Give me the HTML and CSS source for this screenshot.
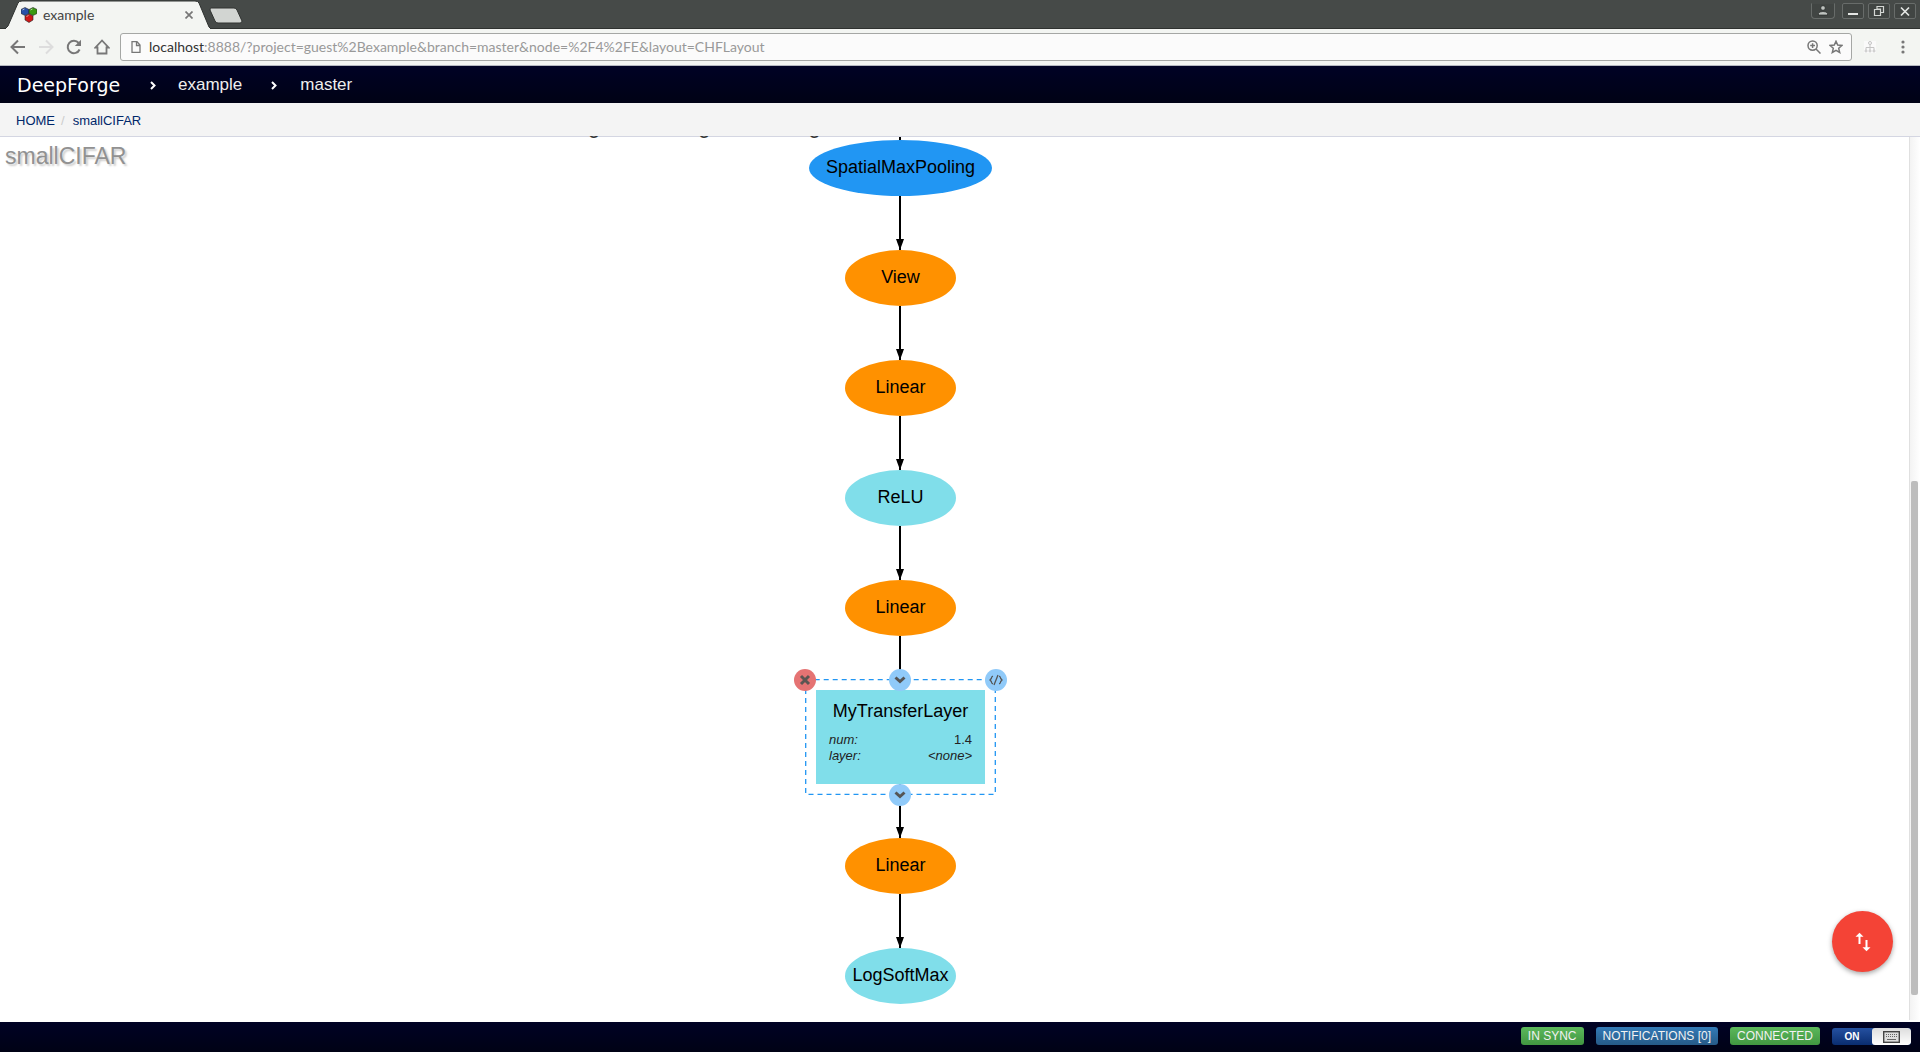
FILE: index.html
```html
<!DOCTYPE html>
<html lang="en">
<head>
<meta charset="utf-8">
<title>example</title>
<link rel="stylesheet" href="styles.css">
</head>
<body>
<header class="tabs">
  <div class="tab">
    <svg class="tab-shape" viewBox="0 0 206 29" width="206" height="29"><path d="M0 29L3 26L13 3Q14 1 17 1H190Q193 1 194 3L204 27L206 29Z" fill="#f3f5f2" stroke="#2f3230"/><path d="M1 29H205" stroke="#f3f5f2" stroke-width="2"/></svg>
    <svg class="favicon" viewBox="0 0 16 16" width="16" height="16"><g stroke="#222" stroke-width=".6"><path d="M4 .5l4 2v4l-4 2-4-2v-4z" fill="#2850a8"/><path d="M12 .5l4 2v4l-4 2-4-2v-4z" fill="#3a9a10"/><path d="M8 7l4 2v4l-4 2.5L4 13V9z" fill="#d01818"/></g><path d="M1.5 3l2-1M9.5 3l2-1M5.5 9.5l2-1" stroke="#fff" opacity=".6"/></svg>
    <span class="tab-title">example</span>
    <button class="plain" aria-label="Close tab"><svg viewBox="0 0 8 8" width="8" height="8"><path d="M.5.5l7 7M7.500.5l-7 7" stroke="#777" stroke-width="1.700"/></svg></button>
  </div>
  <button class="plain newtab" aria-label="New tab"><svg viewBox="0 0 34 17" width="34" height="17"><path d="M2 1H25Q27 1 28 3L33 14Q33 16 31 16H9Q7 16 6 14L1 3Q1 1 2 1Z" fill="#d2d5d2" stroke="#303331"/></svg></button>
  <div class="wm">
    <button class="wbtn user" aria-label="User"><svg viewBox="0 0 12 12" width="12" height="12"><g fill="#bfc3c0" stroke="#242625" stroke-width=".7"><circle cx="6" cy="3" r="2.300"/><path d="M1.500 10V8.500Q2 6.500 6 6.500T10.500 8.500V10Z"/></g></svg></button>
    <button class="wbtn" aria-label="Minimize"><svg viewBox="0 0 12 12" width="12" height="12"><path d="M1 9h10" stroke="#e4e6e4" stroke-width="2"/></svg></button>
    <button class="wbtn" aria-label="Restore"><svg viewBox="0 0 12 12" width="12" height="12"><path d="M4 4V1.500H10.500V7.500H8M1.500 4.500H7.500V10.500H1.500ZM4 4H7.500V7.500" fill="none" stroke="#d4d7d4" stroke-width="1.200"/></svg></button>
    <button class="wbtn" aria-label="Close"><svg viewBox="0 0 12 12" width="12" height="12"><path d="M2 2.500l8 8M10 2.500l-8 8" stroke="#e4e6e4" stroke-width="1.700"/></svg></button>
  </div>
</header>

<div class="toolbar">
  <button class="plain" aria-label="Back"><svg viewBox="0 0 16 16" width="16" height="16"><path d="M15 8H2M8 1.500L1.500 8L8 14.500" fill="none" stroke="#777" stroke-width="2"/></svg></button>
  <button class="plain" aria-label="Forward"><svg viewBox="0 0 16 16" width="16" height="16"><path d="M1 8H14M8 1.500L14.500 8L8 14.500" fill="none" stroke="#ddd" stroke-width="2"/></svg></button>
  <button class="plain" aria-label="Reload"><svg viewBox="0 0 16 16" width="16" height="16"><path d="M13.600 10.500A6.200 6.200 0 1 1 12.700 4" fill="none" stroke="#777" stroke-width="2"/><path d="M15 .8V7H8.800Z" fill="#777"/></svg></button>
  <button class="plain" aria-label="Home"><svg viewBox="0 0 16 16" width="16" height="16"><path d="M8 1.500L1.500 8.500H3.500V14.500H12.500V8.500H14.500Z" fill="none" stroke="#777" stroke-width="1.800"/></svg></button>
  <div class="omnibox">
    <svg viewBox="0 0 10 12" width="10" height="12"><path d="M1 .7H6L9 4V11.300H1ZM5.500 1V4.500H9" fill="none" stroke="#777" stroke-width="1.300"/></svg>
    <span class="url"><b>localhost</b>:8888/?project=guest%2Bexample&amp;branch=master&amp;node=%2F4%2FE&amp;layout=CHFLayout</span>
    <button class="plain" aria-label="Zoom"><svg viewBox="0 0 14 14" width="14" height="14"><g fill="none" stroke="#777" stroke-width="1.500"><circle cx="5.600" cy="5.600" r="4.600"/><path d="M9 9l4.500 4.500M3.200 5.600H8M5.600 3.200V8"/></g></svg></button>
    <button class="plain" aria-label="Bookmark"><svg viewBox="0 0 14 14" width="14" height="14"><path d="M7 1.300L8.700 5.100L12.900 5.500L9.700 8.300L10.700 12.500L7 10.300L3.300 12.500L4.300 8.300L1.100 5.500L5.300 5.100Z" fill="none" stroke="#777" stroke-width="1.500"/></svg></button>
  </div>
  <button class="plain" aria-label="Extension"><svg viewBox="0 0 12 12" width="12" height="12"><rect width="12" height="12" fill="#fafafa"/><g fill="none" stroke="#c4c4c4"><circle cx="6" cy="2" r="1.500"/><path d="M6 3.500V9M2 9V6.500H10V9"/><circle cx="2" cy="10" r="1"/><circle cx="6" cy="10" r="1"/><circle cx="10" cy="10" r="1"/></g></svg></button>
  <button class="plain menu" aria-label="Menu"><svg viewBox="0 0 4 14" width="4" height="14"><g fill="#777"><circle cx="2" cy="2" r="1.600"/><circle cx="2" cy="7" r="1.600"/><circle cx="2" cy="12" r="1.600"/></g></svg></button>
</div>

<nav class="navbar">
  <a class="brand" href="#">DeepForge</a>
  <svg class="sep" viewBox="0 0 6 9" width="6" height="9"><path d="M1 1L4.500 4.500L1 8" fill="none" stroke="#fff" stroke-width="2"/></svg>
  <a href="#">example</a>
  <svg class="sep" viewBox="0 0 6 9" width="6" height="9"><path d="M1 1L4.500 4.500L1 8" fill="none" stroke="#fff" stroke-width="2"/></svg>
  <a href="#">master</a>
</nav>

<nav class="crumbs"><a href="#">HOME</a><span>/</span><a href="#">smallCIFAR</a></nav>

<main class="canvas">
  <h1>smallCIFAR</h1>
  <div class="hint" aria-hidden="true"><span>g</span><span>g</span><span>g</span></div>
  <div class="graph">
    <div class="edge"></div>
    <div class="node wide blue">SpatialMaxPooling</div>
    <div class="edge"></div>
    <div class="node orange">View</div>
    <div class="edge"></div>
    <div class="node orange">Linear</div>
    <div class="edge"></div>
    <div class="node cyan">ReLU</div>
    <div class="edge"></div>
    <div class="node orange">Linear</div>
    <div class="edge"></div>
    <section class="layer cyan">
      <h2>MyTransferLayer</h2>
      <dl><dt>num:</dt><dd>1.4</dd><dt>layer:</dt><dd><i>&lt;none&gt;</i></dd></dl>
      <div class="selection">
        <svg class="dash" width="100%" height="100%"><rect x=".7" y=".7" width="189.600" height="114.600" fill="none" stroke="#2196f3" stroke-dasharray="5 4" stroke-width="1.300"/></svg>
        <button class="dot remove" aria-label="Delete layer"><svg viewBox="0 0 12 12" width="12" height="12"><path d="M2 2l8 8M10 2l-8 8" stroke="#5b5552" stroke-width="3"/></svg></button>
        <button class="dot code" aria-label="Edit code"><svg viewBox="0 0 14 12" width="14" height="12"><path d="M4 2.200Q2.500 2.500 2.300 4.500L1 6L2.300 7.500Q2.500 9.500 4 9.800M10 2.200Q11.500 2.500 11.700 4.500L13 6L11.700 7.500Q11.500 9.500 10 9.800M9 1L5 11" fill="none" stroke="#555" stroke-width="1.300"/></svg></button>
        <button class="dot before" aria-label="Insert before"><svg viewBox="0 0 12 8" width="12" height="8"><path d="M1.500 1.500L6 5.500L10.500 1.500" fill="none" stroke="#555" stroke-width="3"/></svg></button>
        <button class="dot after" aria-label="Insert after"><svg viewBox="0 0 12 8" width="12" height="8"><path d="M1.500 1.500L6 5.500L10.500 1.500" fill="none" stroke="#555" stroke-width="3"/></svg></button>
      </div>
    </section>
    <div class="edge"></div>
    <div class="node orange">Linear</div>
    <div class="edge"></div>
    <div class="node cyan">LogSoftMax</div>
  </div>
  <button class="fab" aria-label="Swap"><svg viewBox="0 0 16 20" width="16" height="20"><path d="M4.500 12V3M11.500 8V17" stroke="#fff" stroke-width="2"/><path d="M.5 4.700L4.500.700L8.500 4.700ZM7.500 15.300L11.500 19.300L15.500 15.300Z" fill="#fff"/></svg></button>
  <div class="track"><div class="thumb"></div></div>
</main>

<footer class="status">
  <button class="label green">IN SYNC</button>
  <button class="label navy">NOTIFICATIONS [0]</button>
  <button class="label green">CONNECTED</button>
  <button class="toggle"><span class="on">ON</span><span class="keys"><svg viewBox="0 0 17 12" width="17" height="12"><rect x=".7" y=".7" width="15.600" height="10.600" fill="#ddd" stroke="#444" stroke-width="1.400"/><path d="M3 3.500H14M3 5.500H14" stroke="#666" stroke-dasharray="1 1"/><path d="M4 8.500H13" stroke="#666"/></svg></span></button>
</footer>
</body>
</html>
```
FILE: styles.css
```css
* { box-sizing: border-box; }
body {
  margin: 0;
  height: 100vh;
  display: flex;
  flex-direction: column;
  overflow: hidden;
  font-family: "Liberation Sans", Arial, sans-serif;
  background: #fff;
}
button { font-family: inherit; border: 0; padding: 0; margin: 0; }
svg { display: block; flex: none; }
a { text-decoration: none; color: inherit; }
.plain { background: none; flex: none; }

/* browser tabs */
.tabs {
  flex: none;
  display: flex;
  height: 29px;
  padding-left: 5px;
  background: #464a48;
  box-shadow: inset 0 -1px #2f3230;
}
.tab {
  position: relative;
  display: flex;
  align-items: center;
  width: 206px;
  padding: 0 18px 0 16px;
}
.tab > * { position: relative; }
.tab .tab-shape { position: absolute; left: 0; top: 0; }
.tab-title {
  flex: 1;
  padding-left: 6px;
  font: 14px/29px Lato, sans-serif;
  color: #444;
}
.newtab { margin-left: -2px; padding-top: 7px; align-self: flex-start; }
.wm { margin-left: auto; display: flex; gap: 4px; padding: 3px 4px 0 0; }
.wbtn {
  display: flex;
  align-items: center;
  justify-content: center;
  width: 22px;
  height: 16px;
  background: #414543;
  border: 1px solid #686c6a;
  border-radius: 2px;
}
.wbtn.user { width: 24px; margin: 0 3px 0 0; border-top-color: #464a48; border-radius: 0 0 4px 4px; }

/* address bar */
.toolbar {
  flex: none;
  display: flex;
  align-items: center;
  gap: 12px;
  height: 37px;
  padding: 0 15px 0 10px;
  background: #f3f5f2;
  border-bottom: 1px solid #b5b8c0;
}
.omnibox {
  flex: 1;
  display: flex;
  align-items: center;
  gap: 8px;
  height: 28px;
  margin-left: -2px;
  padding: 0 8px 0 10px;
  border: 1px solid #a5a7a5;
  border-radius: 3px;
  background: #fbfbfb;
}
.url { flex: 1; font: 14px/26px Lato, sans-serif; color: #999; }
.url b { font-weight: 400; color: #333; }
.menu { margin-left: 13px; }

/* project navigation */
.navbar {
  flex: none;
  display: flex;
  align-items: center;
  height: 37px;
  padding: 1px 17px 0;
  font-size: 17px;
  color: #eee;
  background: linear-gradient(#000225, #000215);
}
.navbar .brand { width: 133px; font: 19px "DejaVu Sans", sans-serif; color: #fff; }
.sep { margin-right: 22px; }
.navbar a + .sep:not(:nth-child(2)) { margin-left: 29px; margin-right: 23px; }
.crumbs {
  flex: none;
  display: flex;
  gap: 6px;
  height: 34px;
  padding-left: 16px;
  font-size: 13px;
  line-height: 35px;
  color: #00276a;
  background: #f4f4f4;
  border-bottom: 1px solid #d4d6e2;
}
.crumbs span { color: #ccc; padding-right: 2px; }

/* diagram */
.canvas { position: relative; flex: 1; min-height: 0; }
h1 {
  margin: 0;
  padding: 6px 5px;
  font-size: 23px;
  line-height: 27px;
  font-weight: 400;
  color: #919191;
  text-shadow: 2px 2px 2px #ccc;
}
.hint {
  position: absolute;
  top: -1px;
  left: 588px;
  display: flex;
  align-items: flex-end;
  gap: 98px;
  height: 3px;
  overflow: hidden;
  font-size: 22px;
  line-height: 26px;
  color: #333;
}
.graph {
  position: absolute;
  top: 0;
  left: 816px;
  width: 169px;
  height: 100%;
  display: flex;
  flex-direction: column;
  align-items: center;
}
.node {
  flex: none;
  width: 111px;
  height: 56px;
  border-radius: 50%;
  font-size: 18px;
  line-height: 55px;
  text-align: center;
}
.node.wide { width: 183px; }
.blue { background: #2196f3; }
.orange { background: #ff9100; }
.cyan { background: #80deea; }
.edge {
  flex: none;
  width: 9px;
  height: 54px;
  background: linear-gradient(#000, #000) 3px 0 / 2px 100% no-repeat;
  display: flex;
  align-items: flex-end;
}
.edge:first-child { height: 3px; overflow: hidden; }
.edge::after {
  content: "";
  border: solid transparent;
  border-width: 11px 4px 0;
  border-top-color: #000;
}
.layer {
  position: relative;
  flex: none;
  width: 169px;
  height: 94px;
  padding: 10px 13px;
}
h2 { margin: 0; font-size: 18px; line-height: 22px; font-weight: 400; text-align: center; white-space: nowrap; }
dl {
  display: grid;
  grid-template-columns: auto auto;
  margin: 10px 0 0;
  font-size: 13px;
  line-height: 16px;
  color: #222;
}
dt { font-style: italic; }
dd { margin: 0; text-align: right; }
.selection { position: absolute; inset: -11px; }
.dot {
  position: absolute;
  display: flex;
  align-items: center;
  justify-content: center;
  width: 22px;
  height: 22px;
  border-radius: 50%;
  background: #90caf9;
}
.remove { background: #e57373; left: -11px; top: -10px; }
.code { right: -11px; top: -10px; }
.before { left: 84px; top: -10px; }
.after { left: 84px; bottom: -11px; }
.fab {
  position: absolute;
  right: 27px;
  bottom: 50px;
  display: flex;
  align-items: center;
  justify-content: center;
  width: 61px;
  height: 61px;
  border-radius: 50%;
  background: #f44336;
  box-shadow: 0 2px 5px rgba(0, 0, 0, .35);
}
.track {
  position: absolute;
  top: 0;
  right: 0;
  bottom: 2px;
  width: 11px;
  border-left: 1px solid #e0e0e0;
  background: linear-gradient(90deg, #f3f3f3, #fff);
}
.thumb {
  position: absolute;
  top: 39%;
  bottom: 25px;
  left: 1px;
  width: 7px;
  border-radius: 2px;
  background: #bdbdbd;
}

/* status bar */
.status {
  flex: none;
  display: flex;
  align-items: flex-start;
  justify-content: flex-end;
  gap: 12px;
  height: 30px;
  padding: 5px 9px 0;
  background: linear-gradient(#000225, #000215);
}
.label {
  height: 18px;
  padding: 0 7px;
  border-radius: 3px;
  font-size: 12px;
  line-height: 18px;
  color: #f2f2f2;
}
.green { background: linear-gradient(#5cb85c, #419641); }
.navy { background: linear-gradient(#337ab7, #265a88); }
.toggle {
  display: flex;
  width: 79px;
  height: 17px;
  margin-top: 1px;
  border-radius: 3px;
  overflow: hidden;
  background: linear-gradient(#2450a0, #0a2d70);
  color: #fff;
}
.on { flex: 1; font-size: 10px; line-height: 17px; font-weight: 700; }
.keys {
  display: flex;
  align-items: center;
  justify-content: center;
  width: 39px;
  height: 17px;
  border-radius: 3px;
  background: linear-gradient(#ddd, #fff);
}
```
